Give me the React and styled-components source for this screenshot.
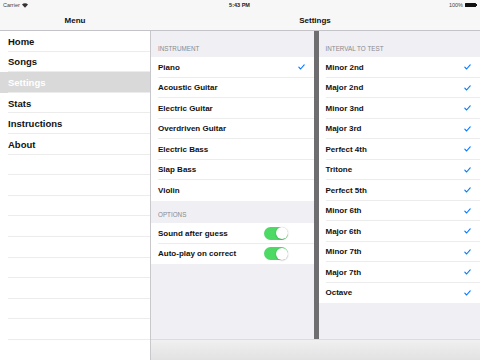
import React from "react";
import styled, { createGlobalStyle } from "styled-components";

const Global = createGlobalStyle`
  html, body {
    margin: 0;
    padding: 0;
    background: #fff;
  }
  * {
    box-sizing: border-box;
  }
`;

const menuItems = ["Home", "Songs", "Settings", "Stats", "Instructions", "About"];
const instruments = [
  "Piano",
  "Acoustic Guitar",
  "Electric Guitar",
  "Overdriven Guitar",
  "Electric Bass",
  "Slap Bass",
  "Violin",
];
const intervals = [
  "Minor 2nd",
  "Major 2nd",
  "Minor 3nd",
  "Major 3rd",
  "Perfect 4th",
  "Tritone",
  "Perfect 5th",
  "Minor 6th",
  "Major 6th",
  "Minor 7th",
  "Major 7th",
  "Octave",
];

const Check = () => (
  <svg width="7" height="6" viewBox="0 0 7 6">
    <path
      d="M0.8 3.2 L2.6 5 L6.2 0.8"
      fill="none"
      stroke="#007aff"
      strokeWidth="1.1"
      strokeLinecap="round"
      strokeLinejoin="round"
    />
  </svg>
);

const App = () => {
  return (
    <>
      <Global />
      <Screen>
        <TopBar>
          <StatusBar>
            <Carrier>
              Carrier
              <svg width="6" height="5" viewBox="0 0 12 9">
                <path d="M6 9 L0 2.5 A8.5 8.5 0 0 1 12 2.5 Z" fill="#333" />
              </svg>
            </Carrier>
            <Clock>5:43 PM</Clock>
            <Battery>
              100%
              <BatteryBody />
            </Battery>
          </StatusBar>
          <NavRow>
            <NavTitle $width="150px">Menu</NavTitle>
            <NavTitle>Settings</NavTitle>
          </NavRow>
        </TopBar>
        <Main>
          <Sidebar>
            {menuItems.map((item) => (
              <MenuRow key={item} $active={item === "Settings"}>
                {item}
              </MenuRow>
            ))}
            {Array.from({ length: 10 }).map((_, i) => (
              <MenuRow key={"e" + i} />
            ))}
          </Sidebar>
          <Detail>
            <Split>
              <Pane $width="163px">
                <SectionHeader $height="26px">Instrument</SectionHeader>
                <Group>
                  {instruments.map((name, i) => (
                    <Row key={name}>
                      <Label>{name}</Label>
                      {i === 0 && <Check />}
                    </Row>
                  ))}
                </Group>
                <SectionHeader $height="22.5px">Options</SectionHeader>
                <Group>
                  <Row>
                    <Label>Sound after guess</Label>
                    <Toggle />
                  </Row>
                  <Row>
                    <Label>Auto-play on correct</Label>
                    <Toggle />
                  </Row>
                </Group>
              </Pane>
              <Divider />
              <Pane>
                <SectionHeader $height="26px">Interval to test</SectionHeader>
                <Group>
                  {intervals.map((name) => (
                    <Row key={name}>
                      <Label>{name}</Label>
                      <Check />
                    </Row>
                  ))}
                </Group>
              </Pane>
            </Split>
            <Toolbar />
          </Detail>
        </Main>
      </Screen>
    </>
  );
};

export default App;

const Screen = styled.div`
  width: 480px;
  height: 360px;
  display: flex;
  flex-direction: column;
  overflow: hidden;
  font-family: "Helvetica Neue", "Liberation Sans", Arial, sans-serif;
  color: #000;
`;

const TopBar = styled.div`
  height: 31px;
  background: #f7f7f7;
  border-bottom: 1px solid #c4c4c8;
  display: flex;
  flex-direction: column;
`;

const StatusBar = styled.div`
  height: 10px;
  display: flex;
  align-items: center;
  justify-content: space-between;
  padding: 0 4px 0 3px;
  font-size: 5.5px;
  color: #444;
`;

const Carrier = styled.div`
  width: 60px;
  display: flex;
  align-items: center;
  gap: 2px;
`;

const Clock = styled.div`
  font-weight: bold;
  color: #222;
`;

const Battery = styled.div`
  width: 60px;
  display: flex;
  align-items: center;
  justify-content: flex-end;
  gap: 2px;
`;

const BatteryBody = styled.div`
  width: 11px;
  height: 4px;
  background: #111;
  border-radius: 0.5px;
  position: relative;

  &::after {
    content: "";
    position: absolute;
    right: -1.5px;
    top: 1px;
    width: 1px;
    height: 2px;
    background: #111;
  }
`;

const NavRow = styled.div`
  flex: 1;
  display: flex;
  align-items: center;
`;

const NavTitle = styled.div`
  width: ${(p) => p.$width || "auto"};
  flex: ${(p) => (p.$width ? "none" : 1)};
  text-align: center;
  font-size: 8px;
  font-weight: bold;
  color: #111;
  padding-top: 1px;
`;

const Main = styled.div`
  flex: 1;
  display: flex;
  min-height: 0;
`;

const Sidebar = styled.div`
  width: 151px;
  background: #fff;
  border-right: 1px solid #c8c7cc;
  overflow: hidden;
`;

const MenuRow = styled.div`
  height: 20.6px;
  display: flex;
  align-items: center;
  padding-left: 8px;
  font-size: 9.5px;
  font-weight: bold;
  color: ${(p) => (p.$active ? "#fff" : "#111")};
  background: ${(p) => (p.$active ? "#d9d9d9" : "#fff")};
  position: relative;

  &::after {
    content: "";
    position: absolute;
    left: 8px;
    right: 0;
    bottom: 0;
    height: 1px;
    background: #ececec;
  }
`;

const Detail = styled.div`
  flex: 1;
  display: flex;
  flex-direction: column;
  background: #efeff4;
`;

const Split = styled.div`
  flex: 1;
  display: flex;
`;

const Pane = styled.div`
  width: ${(p) => p.$width || "auto"};
  flex: ${(p) => (p.$width ? "none" : 1)};
  background: #efeff4;
`;

const Divider = styled.div`
  width: 4.5px;
  background: #6e6e70;
`;

const SectionHeader = styled.div`
  height: ${(p) => p.$height};
  display: flex;
  align-items: flex-end;
  padding: 0 0 5px 7px;
  font-size: 6.3px;
  text-transform: uppercase;
  color: #8a8a8f;
`;

const Group = styled.div`
  background: #fff;
`;

const Row = styled.div`
  height: 20.5px;
  display: flex;
  align-items: center;
  justify-content: space-between;
  padding: 0 9px 0 7px;
  position: relative;

  &:not(:last-child)::after {
    content: "";
    position: absolute;
    left: 7px;
    right: 0;
    bottom: 0;
    height: 1px;
    background: #ececec;
  }
`;

const Label = styled.span`
  font-size: 8px;
  font-weight: bold;
  color: #111;
`;

const Toggle = styled.div`
  width: 24px;
  height: 13px;
  border-radius: 7px;
  background: #4cd964;
  margin-right: 17px;
  position: relative;

  &::after {
    content: "";
    position: absolute;
    right: 0.5px;
    top: 0.5px;
    width: 12px;
    height: 12px;
    border-radius: 50%;
    background: #fff;
    box-shadow: 0 0.5px 1.5px rgba(0, 0, 0, 0.3);
  }
`;

const Toolbar = styled.div`
  height: 21px;
  background: linear-gradient(#f0f0f0, #e2e2e2);
  border-top: 1px solid #dcdcdc;
`;
